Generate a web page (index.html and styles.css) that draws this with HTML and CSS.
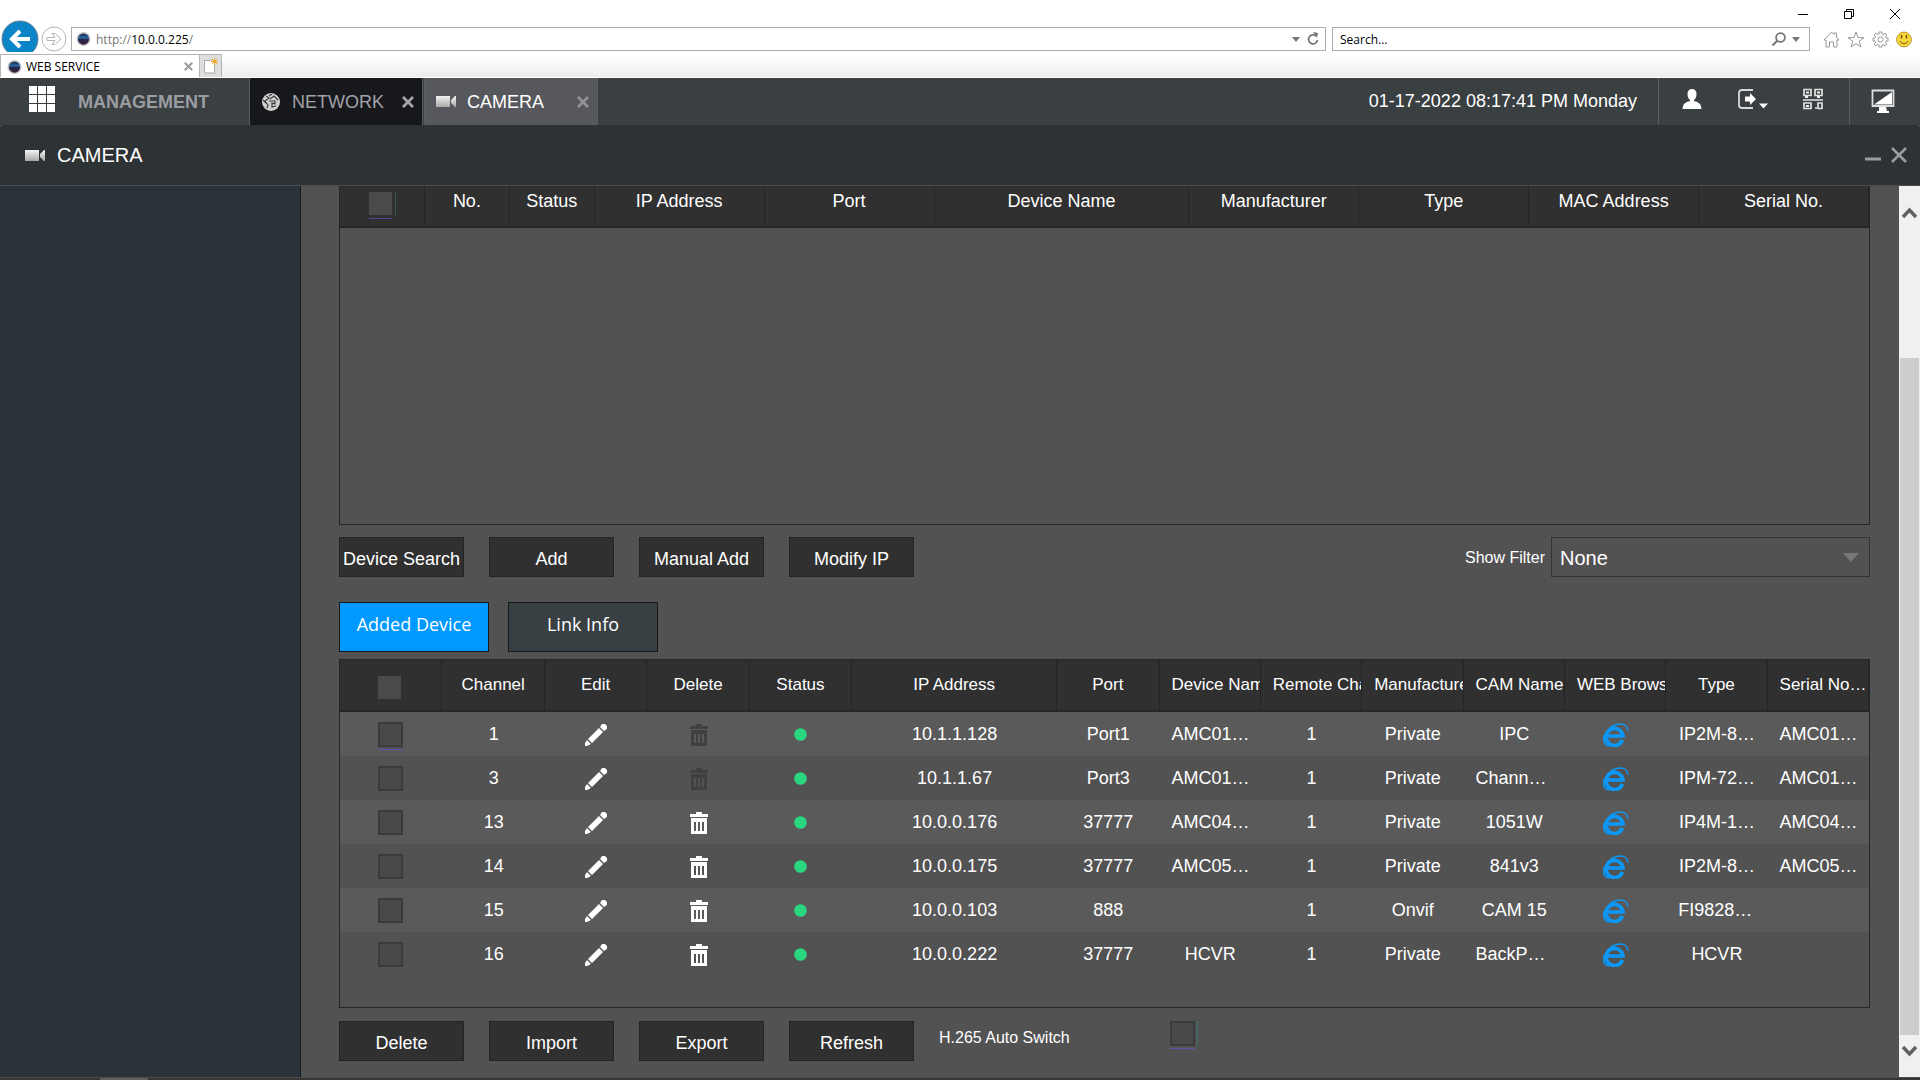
FILE: index.html
```html
<!DOCTYPE html>
<html lang="en">
<head>
<meta charset="utf-8">
<title>WEB SERVICE</title>
<link rel="stylesheet" href="styles.css">
</head>
<body>
<svg class="sprite" aria-hidden="true">
  <defs>
    <linearGradient id="silver" x1="0" y1="0" x2="0" y2="1"><stop offset="0" stop-color="#f2f2f2"/><stop offset="1" stop-color="#a9a9a9"/></linearGradient>
    <linearGradient id="lens" x1="0" y1="0" x2="0" y2="1"><stop offset="0" stop-color="#17233f"/><stop offset=".4" stop-color="#2b6cab"/><stop offset=".55" stop-color="#26264a"/><stop offset="1" stop-color="#3d1e38"/></linearGradient>
  </defs>
  <symbol id="favicon" viewBox="0 0 16 16"><circle cx="8" cy="8" r="7.5" fill="#c9c7c9"/><circle cx="8" cy="8" r="6" fill="url(#lens)"/></symbol>
  <symbol id="camera" viewBox="0 0 20 13"><path d="M0 1h14v11H0zM15 5l1-1 3-3h1v11h-1l-3-3-1-1z" fill="url(#silver)"/></symbol>
  <symbol id="cross" viewBox="0 0 12 12"><path d="M1 1l10 10M11 1L1 11" fill="none" stroke="currentColor" stroke-width="2.8"/></symbol>
  <symbol id="pencil" viewBox="0 0 22 22"><path fill="#fff" d="M14 4l4 4L7 19l-4-4zM15 3l2-3h3l2 2v3l-3 2zM2 16l4 4-4 2H0v-3z"/></symbol>
  <symbol id="trash" viewBox="0 0 18 22"><path fill="currentColor" fill-rule="evenodd" d="M6 2V0h6v2h6v3H0V2zM1 6h16v16H1zM4 10v9h2v-9zM8 10v9h2v-9zM12 10v9h2v-9z"/></symbol>
  <symbol id="dot" viewBox="0 0 13 13"><circle cx="6.500" cy="6.500" r="6.300" fill="#2ad67f"/></symbol>
  <symbol id="ie" viewBox="0 0 26 24"><g fill="none" stroke="#0b98fa"><path d="M19.500 17A8.500 8.500 0 1 1 20 13H5" stroke-width="3.600"/><path d="M3 10C7 3 13 1 18 1c5 0 7 4 7 7" stroke-width="1.300"/><path d="M1 12c-1 5 0 10 5 11" stroke-width="1.600"/></g></symbol>
  <symbol id="chevron" viewBox="0 0 15 12"><path d="M1 10l6.500-7L14 10" fill="none" stroke="#606060" stroke-width="3.400"/></symbol>
</svg>

<header class="browser">
  <div class="window-controls">
    <button aria-label="Minimize"><svg width="10" height="10"><path d="M0 5.500h10" stroke="#000"/></svg></button>
    <button aria-label="Restore"><svg width="10" height="10"><path d="M.5 2.500h7v7h-7zM2.500 2.500v-2h7v7h-2" fill="none" stroke="#000"/></svg></button>
    <button aria-label="Close"><svg width="10" height="10"><path d="M0 0l10 10M10 0L0 10" stroke="#000"/></svg></button>
  </div>
  <div class="address-row">
    <button class="back" aria-label="Back"><svg width="38" height="38" viewBox="0 0 38 38"><circle cx="19" cy="19" r="18" fill="#0b84c8" stroke="#67808f"/><path d="M29 19H12M19 11l-8 8 8 8" fill="none" stroke="#fff" stroke-width="4"/></svg></button>
    <button class="forward" aria-label="Forward"><svg width="26" height="26" viewBox="0 0 26 26"><circle cx="13" cy="13" r="12" fill="#fff" stroke="#b4b4b4"/><path d="M6 11.500h8l-3-4h3l6 5.500-6 5.500h-3l3-4H6z" fill="none" stroke="#b4b4b4"/></svg></button>
    <div class="url-box">
      <svg width="15" height="16"><use href="#favicon"/></svg>
      <a class="url" href="#">http://<b>10.0.0.225</b>/</a>
      <svg width="8" height="5"><path d="M0 0h8L4 5z" fill="#777"/></svg>
      <svg class="reload" width="12" height="14" viewBox="0 0 12 14"><path d="M9 4A4.500 4.500 0 1 0 10.500 8" fill="none" stroke="#777" stroke-width="1.800"/><path d="M6 0l5 1-1 5z" fill="#777"/></svg>
    </div>
    <div class="search-box">
      <input type="text" value="Search..." aria-label="Search">
      <svg width="14" height="14" viewBox="0 0 14 14"><circle cx="8.500" cy="5.500" r="4.400" fill="none" stroke="#777" stroke-width="1.800"/><path d="M5.500 8.500L.5 13.500" stroke="#777" stroke-width="2"/></svg>
      <svg width="8" height="5"><path d="M0 0h8L4 5z" fill="#777"/></svg>
    </div>
    <div class="tools">
      <svg width="17" height="17" viewBox="0 0 17 17"><path d="M1 9l7.500-8L11 3.500V2h2.500v4L16 9h-2v7h-3.500v-5h-4v5H3V9z" fill="none" stroke="#999"/></svg>
      <svg width="18" height="17" viewBox="0 0 18 17"><path d="M9 1l2 5.500 6 .2-4.800 3.600L14 16l-5-3.400L4 16l1.800-5.700L1 6.700l6-.2z" fill="none" stroke="#999"/></svg>
      <svg width="17" height="17" viewBox="0 0 17 17"><circle cx="8.500" cy="8.500" r="2.500" fill="none" stroke="#999"/><path d="M7 1h3v2l1.500.6L13 2l2 2-1.500 1.500L14 7h2v3h-2l-.5 1.500L15 13l-2 2-1.500-1.500L10 14v2H7v-2l-1.500-.5L4 15l-2-2 1.500-1.500L3 10H1V7h2l.5-1.500L2 4l2-2 1.500 1.500L7 3z" fill="none" stroke="#999"/></svg>
      <svg width="16" height="17" viewBox="0 0 16 17"><circle cx="8" cy="8.500" r="7.400" fill="#fbd537" stroke="#b79a3e"/><path d="M5.500 4v3.500M10.500 4v3.500" stroke="#695a1b" stroke-width="1.500"/><path d="M4 10c2 3.500 6 3.500 8 0" fill="none" stroke="#695a1b"/></svg>
    </div>
  </div>
  <div class="browser-tabs">
    <div class="browser-tab">
      <svg width="15" height="16"><use href="#favicon"/></svg>
      <span>WEB SERVICE</span>
      <button aria-label="Close tab"><svg width="9" height="9"><use href="#cross"/></svg></button>
    </div>
    <button class="new-tab" aria-label="New tab"><svg width="14" height="16" viewBox="0 0 14 16"><path d="M.5 2.500h7l3 3v9.500H.5z" fill="#fff" stroke="#aaa"/><path d="M10.500 0v7M7 3.500h7M8 1l5 5M13 1L8 6" stroke="#f0a428"/></svg></button>
  </div>
</header>

<nav class="app-bar">
  <div class="home">
    <svg width="27" height="26" viewBox="0 0 27 26"><path fill="#fff" d="M0 0h8v8H0zM9 0h8v8H9zM18 0h8v8h-8zM0 9h8v8H0zM9 9h8v8H9zM18 9h8v8h-8zM0 18h8v8H0zM9 18h8v8H9zM18 18h8v8h-8z"/></svg>
    <a href="#">MANAGEMENT</a>
  </div>
  <div class="app-tab network">
    <svg width="18" height="18" viewBox="0 0 18 18"><circle cx="9" cy="9" r="9" fill="#d0d0d0"/><path d="M4 3l3 2-4 3 3 4-1 3M8 6l4-3 4 4M7 8h6v3l-3-1v4l4-1M1 7l3 3M10 1L7 3" fill="none" stroke="#3a3a3a" stroke-width="1.200"/></svg>
    <a href="#">NETWORK</a>
    <button aria-label="Close Network"><svg width="12" height="12"><use href="#cross"/></svg></button>
  </div>
  <div class="app-tab active">
    <svg width="20" height="13"><use href="#camera"/></svg>
    <a href="#">CAMERA</a>
    <button aria-label="Close Camera"><svg width="12" height="12"><use href="#cross"/></svg></button>
  </div>
  <time class="clock">01-17-2022 08:17:41 PM Monday</time>
  <div class="actions">
    <button aria-label="User"><svg width="20" height="20" viewBox="0 0 20 20"><path fill="#fff" d="M10 0c3 0 4.500 2 4.500 5 0 3-1 5-2.500 6v1c4 1 7 2 7.500 8H.5C1 14 4 13 8 12v-1C6.500 10 5.500 8 5.500 5 5.500 2 7 0 10 0z"/></svg></button>
    <button aria-label="Log out"><svg width="30" height="20" viewBox="0 0 30 20"><path d="M15 1H4Q1 1 1 4v12q0 3 3 3h11" fill="none" stroke="#d8d8d8" stroke-width="1.800"/><path fill="#fff" d="M7 7.500h5V4l6 6-6 6v-3.500H7zM21 14.500h9l-4.500 5z"/></svg></button>
    <button aria-label="QR code"><svg width="20" height="22" viewBox="0 0 20 22"><path d="M1 1.500h7v6H1zM12 1.500h7v6h-7zM1 15h7v5.500H1zM0 12h20M12 20h2M15 17.500v-2.500h4v5.500h-4v-3" fill="none" stroke="#e2e2e2" stroke-width="1.700"/><path d="M3 3.500h3v2H3zM14 3.500h3v2h-3zM3 17h3v2H3zM2 8h3v2H2zM14 8h3v2h-3z" fill="#eee"/></svg></button>
  </div>
  <div class="monitor">
    <button aria-label="Live view"><svg width="24" height="24" viewBox="0 0 24 24"><path d="M1.500 1.500h21V17h-21z" fill="none" stroke="#ddd" stroke-width="1.800"/><path fill="#fff" d="M21 3v12.500H3zM8 18h7l1 4h2v2H6v-2h2z"/></svg></button>
  </div>
</nav>

<div class="page-head">
  <svg width="20" height="13"><use href="#camera"/></svg>
  <h1>CAMERA</h1>
  <button aria-label="Minimize page"><svg width="16" height="16" viewBox="0 0 16 16"><path d="M0 12h16" stroke="#9a9c9e" stroke-width="3"/></svg></button>
  <button aria-label="Close page"><svg width="16" height="16" viewBox="0 0 16 16"><path d="M1 1l14 14M15 1L1 15" stroke="#9a9c9e" stroke-width="2.600"/></svg></button>
</div>

<div class="workspace">
  <aside class="sidebar"></aside>
  <main class="content">
    <div class="frame found">
      <table>
        <colgroup><col span="3" class="unit"><col span="2" class="unit2"><col class="unit3"><col span="4" class="unit2"></colgroup>
        <thead><tr>
          <th><input type="checkbox" class="small lined" aria-label="Select all found"></th><th>No.</th><th>Status</th><th>IP Address</th><th>Port</th><th>Device Name</th><th>Manufacturer</th><th>Type</th><th>MAC Address</th><th>Serial No.</th>
        </tr></thead>
      </table>
    </div>

    <div class="button-row search-row">
      <button class="btn">Device Search</button>
      <button class="btn">Add</button>
      <button class="btn">Manual Add</button>
      <button class="btn">Modify IP</button>
      <label class="filter-label" for="filter">Show Filter</label>
      <div class="select-wrap">
        <select id="filter"><option>None</option></select>
        <svg width="16" height="10"><path d="M0 0h16L8 9z" fill="#767779"/></svg>
      </div>
    </div>

    <div class="tabs">
      <button class="tab selected">Added Device</button>
      <button class="tab">Link Info</button>
    </div>

    <div class="frame added">
      <table>
        <colgroup><col span="5" class="wide"><col class="double"><col class="wide"><col span="7"></colgroup>
        <thead><tr>
          <th><input type="checkbox" class="small" aria-label="Select all added"></th><th>Channel</th><th>Edit</th><th>Delete</th><th>Status</th><th>IP Address</th><th>Port</th><th>Device Name</th><th>Remote Channel</th><th>Manufacturer</th><th>CAM Name</th><th>WEB Browse</th><th>Type</th><th>Serial No…</th>
        </tr></thead>
        <tbody>
          <tr><td><input type="checkbox" class="lined" aria-label="Channel 1"></td><td>1</td><td><button aria-label="Edit"><svg width="22" height="22"><use href="#pencil"/></svg></button></td><td><button aria-label="Delete" disabled><svg width="18" height="22"><use href="#trash"/></svg></button></td><td><svg width="13" height="13"><use href="#dot"/></svg></td><td>10.1.1.128</td><td>Port1</td><td>AMC01…</td><td>1</td><td>Private</td><td>IPC</td><td><a href="#" aria-label="Open"><svg width="26" height="24"><use href="#ie"/></svg></a></td><td>IP2M-8…</td><td>AMC01…</td></tr>
          <tr><td><input type="checkbox" aria-label="Channel 3"></td><td>3</td><td><button aria-label="Edit"><svg width="22" height="22"><use href="#pencil"/></svg></button></td><td><button aria-label="Delete" disabled><svg width="18" height="22"><use href="#trash"/></svg></button></td><td><svg width="13" height="13"><use href="#dot"/></svg></td><td>10.1.1.67</td><td>Port3</td><td>AMC01…</td><td>1</td><td>Private</td><td class="start">Chann…</td><td><a href="#" aria-label="Open"><svg width="26" height="24"><use href="#ie"/></svg></a></td><td>IPM-72…</td><td>AMC01…</td></tr>
          <tr><td><input type="checkbox" aria-label="Channel 13"></td><td>13</td><td><button aria-label="Edit"><svg width="22" height="22"><use href="#pencil"/></svg></button></td><td><button aria-label="Delete"><svg width="18" height="22"><use href="#trash"/></svg></button></td><td><svg width="13" height="13"><use href="#dot"/></svg></td><td>10.0.0.176</td><td>37777</td><td>AMC04…</td><td>1</td><td>Private</td><td>1051W</td><td><a href="#" aria-label="Open"><svg width="26" height="24"><use href="#ie"/></svg></a></td><td>IP4M-1…</td><td>AMC04…</td></tr>
          <tr><td><input type="checkbox" aria-label="Channel 14"></td><td>14</td><td><button aria-label="Edit"><svg width="22" height="22"><use href="#pencil"/></svg></button></td><td><button aria-label="Delete"><svg width="18" height="22"><use href="#trash"/></svg></button></td><td><svg width="13" height="13"><use href="#dot"/></svg></td><td>10.0.0.175</td><td>37777</td><td>AMC05…</td><td>1</td><td>Private</td><td>841v3</td><td><a href="#" aria-label="Open"><svg width="26" height="24"><use href="#ie"/></svg></a></td><td>IP2M-8…</td><td>AMC05…</td></tr>
          <tr><td><input type="checkbox" aria-label="Channel 15"></td><td>15</td><td><button aria-label="Edit"><svg width="22" height="22"><use href="#pencil"/></svg></button></td><td><button aria-label="Delete"><svg width="18" height="22"><use href="#trash"/></svg></button></td><td><svg width="13" height="13"><use href="#dot"/></svg></td><td>10.0.0.103</td><td>888</td><td></td><td>1</td><td>Onvif</td><td>CAM 15</td><td><a href="#" aria-label="Open"><svg width="26" height="24"><use href="#ie"/></svg></a></td><td class="start">FI9828…</td><td></td></tr>
          <tr><td><input type="checkbox" aria-label="Channel 16"></td><td>16</td><td><button aria-label="Edit"><svg width="22" height="22"><use href="#pencil"/></svg></button></td><td><button aria-label="Delete"><svg width="18" height="22"><use href="#trash"/></svg></button></td><td><svg width="13" height="13"><use href="#dot"/></svg></td><td>10.0.0.222</td><td>37777</td><td>HCVR</td><td>1</td><td>Private</td><td class="start">BackP…</td><td><a href="#" aria-label="Open"><svg width="26" height="24"><use href="#ie"/></svg></a></td><td>HCVR</td><td></td></tr>
        </tbody>
      </table>
    </div>

    <div class="button-row">
      <button class="btn">Delete</button>
      <button class="btn">Import</button>
      <button class="btn">Export</button>
      <button class="btn">Refresh</button>
      <label class="switch-label" for="h265">H.265 Auto Switch</label>
      <input type="checkbox" id="h265" class="lined">
    </div>
  </main>
  <div class="scrollbar">
    <svg width="15" height="12"><use href="#chevron"/></svg>
    <div class="thumb"></div>
    <svg class="down" width="15" height="12"><use href="#chevron"/></svg>
  </div>
</div>
<footer class="taskbar"><div class="task"></div></footer>
</body>
</html>
```

FILE: styles.css
```css
* { box-sizing: border-box; }

body {
  margin: 0;
  min-height: 100vh;
  display: flex;
  flex-direction: column;
  background: #525252;
  color: #fff;
  font: 18px/20px "Liberation Sans", Arial, sans-serif;
}

button {
  padding: 0;
  border: 0;
  background: none;
  color: inherit;
  font: inherit;
  cursor: pointer;
}

a { color: inherit; text-decoration: none; }
svg { display: block; flex: none; }
.sprite { position: absolute; width: 0; height: 0; }

/* Browser window */
.browser {
  height: 78px;
  background: #fff;
  color: #000;
  font: 12px/16px "Open Sans", "Noto Sans", sans-serif;
}

.window-controls {
  height: 27px;
  display: flex;
  justify-content: flex-end;
  align-items: center;
  gap: 36px;
  padding: 1px 20px 0 0;
}

.address-row {
  height: 24px;
  display: flex;
  align-items: center;
  padding: 0 8px 0 1px;
}

.back { margin-right: 2px; }
.forward { margin-right: 4px; }

.url-box, .search-box {
  height: 24px;
  display: flex;
  align-items: center;
  border: 1px solid #ababab;
}

.url-box { flex: 1; padding: 0 6px 0 4px; }
.url { flex: 1; margin-left: 5px; padding-top: 1px; color: #777; }
.url b { font-weight: 400; color: #000; }
.reload { margin-left: 7px; }

.search-box {
  width: 478px;
  margin: 0 13px 0 6px;
  padding: 0 9px 0 7px;
  gap: 6px;
}

.search-box input {
  flex: 1;
  min-width: 0;
  padding: 1px 0 0;
  border: 0;
  outline: 0;
  background: none;
  color: #000;
  font: inherit;
}

.tools { display: flex; gap: 7px; }

.browser-tabs {
  position: relative;
  height: 26px;
  margin-top: 1px;
  padding-top: 2px;
  display: flex;
  background: linear-gradient(#fff 20%, #ececec);
  border-bottom: 1px solid #fff;
}

.browser-tab {
  width: 200px;
  display: flex;
  align-items: center;
  padding: 1px 6px 0;
  background: #fff;
  border: 1px solid #b5b5b5;
  border-bottom: 0;
}

.browser-tab span { flex: 1; margin-left: 4px; }
.browser-tab button { color: #9b9b9b; }

.new-tab {
  width: 22px;
  display: grid;
  place-items: center;
  background: #dedede;
  border: 1px solid #b5b5b5;
  border-width: 1px 1px 0 0;
}

/* Application bar */
.app-bar {
  height: 47px;
  display: flex;
  background: #3a3f42;
}

.home {
  width: 249px;
  display: flex;
  align-items: center;
  gap: 22px;
  padding: 0 0 5px 29px;
  color: #9a9da0;
  font-weight: 700;
}

.home a { padding-top: 5px; }

.app-tab {
  width: 174px;
  display: flex;
  align-items: center;
  gap: 12px;
  padding: 0 8px 0 12px;
  border: 1px solid #5b5e62;
  border-width: 0 1px;
}

.app-tab a { flex: 1; }
.app-tab button { color: #a5a5a5; }
.network { background: #17181c; color: #a0a2a6; }
.active { margin-left: 1px; padding-left: 11px; gap: 11px; background: #57585d; }
.active button { color: #939396; }

.clock { margin-left: auto; padding: 13px 21px 0 0; }

.actions, .monitor {
  display: flex;
  align-items: center;
  padding-bottom: 5px;
  border-left: 1px solid #5b5f62;
}

.actions {
  width: 191px;
  justify-content: space-between;
  padding-left: 23px;
  padding-right: 26px;
}

.monitor { width: 71px; padding: 0 0 1px 21px; }

.page-head {
  height: 61px;
  display: flex;
  align-items: center;
  gap: 10px;
  padding: 0 13px 0 25px;
  background: #2d3235;
  border-bottom: 1px solid #494d50;
  border-radius: 4px 4px 0 0;
}

.page-head h1 {
  flex: 1;
  margin: 0;
  padding-left: 2px;
  font-size: 20px;
  line-height: 24px;
  font-weight: 400;
}

/* Work area */
.workspace { flex: 1; display: flex; }

.sidebar {
  width: 301px;
  background: #2b323a;
  border-right: 1px solid #171b20;
}

.content {
  flex: 1;
  min-width: 0;
  padding: 0 29px 16px 38px;
}

.frame { border: 1px solid #26262a; }
.found { height: 339px; border-top: 0; }
.added { min-height: 349px; margin-bottom: 13px; }

table {
  width: 100%;
  table-layout: fixed;
  border-collapse: separate;
  border-spacing: 0;
}

.unit { width: 5.555%; }
.unit2 { width: 11.111%; }
.unit3 { width: 16.667%; }
.wide { width: 6.7%; }
.double { width: 13.4%; }

th, td {
  padding: 0 12px;
  overflow: hidden;
  text-align: center;
  white-space: nowrap;
  font-weight: 400;
}

th:first-child, td:first-child { padding: 0 14px 0 12px; }

th {
  height: 52px;
  background: #303030;
  border-right: 1px solid #242426;
  border-bottom: 2px solid #26262b;
}

.found th { height: 41px; padding-bottom: 11px; }
.found .small { margin-top: 6px; }
.added th { font-size: 17px; }

td { height: 44px; }
td.start { text-align: left; }
tbody tr { background: #525252; }
tbody tr:nth-child(odd) { background: #5a5a5a; }

td svg { margin: 0 auto; }
td button, td a { display: block; margin: 2px auto 0; }
td button:disabled { color: #404040; }

input[type="checkbox"] {
  appearance: none;
  display: block;
  width: 25px;
  height: 25px;
  margin: 0 auto;
  background: #494949;
  border: 2px solid #3b3b3b;
}

input.small {
  width: 23px;
  height: 23px;
  background: #4a4a4a;
  border: 0;
}

input.lined { box-shadow: 0 2px #525252, 0 3px #604fae; }
th input.lined { box-shadow: 0 3px #303030, 0 4px #54459a, 3px 0 #303030, 4px 0 #275b59; }
input#h265 { margin: 0 0 15px; box-shadow: 0 2px #525252, 0 3px #604fae, 2px 0 #525252, 3px 0 #38706f; }
.added th .small { margin-top: 4px; }

.button-row {
  display: flex;
  align-items: center;
  gap: 25px;
}

.search-row { margin: 12px 0 25px; }

.btn {
  width: 125px;
  height: 40px;
  padding-top: 3px;
  background: #303030;
  border: 1px solid #242424;
}

.filter-label { margin: 0 -19px 0 auto; padding-top: 2px; font-size: 16px; }
.switch-label { width: 206px; padding-bottom: 6px; font-size: 16px; }

.select-wrap { position: relative; width: 319px; }

.select-wrap select {
  appearance: none;
  display: block;
  width: 100%;
  height: 40px;
  padding: 2px 8px 0;
  background: #525252;
  border: 1px solid #333;
  border-radius: 0;
  color: #fff;
  font: 20px/24px "Liberation Sans", Arial, sans-serif;
}

.select-wrap svg {
  position: absolute;
  top: 16px;
  right: 11px;
  pointer-events: none;
}

.tabs { display: flex; gap: 19px; margin-bottom: 7px; }

.tab {
  width: 150px;
  height: 50px;
  padding-bottom: 6px;
  background: #394044;
  border: 1px solid #16191b;
  font: 18px/24px "Open Sans", "Noto Sans", sans-serif;
}

.selected { background: #0099ff; }

.scrollbar {
  width: 21px;
  display: flex;
  flex-direction: column;
  align-items: center;
  padding: 21px 0 20px;
  background: #f0f0f0;
}

.thumb {
  flex: 1;
  width: 19px;
  margin: 139px 0 10px;
  background: #cdcdcd;
}

.down { transform: rotate(180deg); }

.taskbar {
  height: 3px;
  padding-left: 100px;
  background: #373536;
  border-top: 1px solid #4c4c4c;
}

.task { width: 48px; height: 2px; background: #625f60; }
```
